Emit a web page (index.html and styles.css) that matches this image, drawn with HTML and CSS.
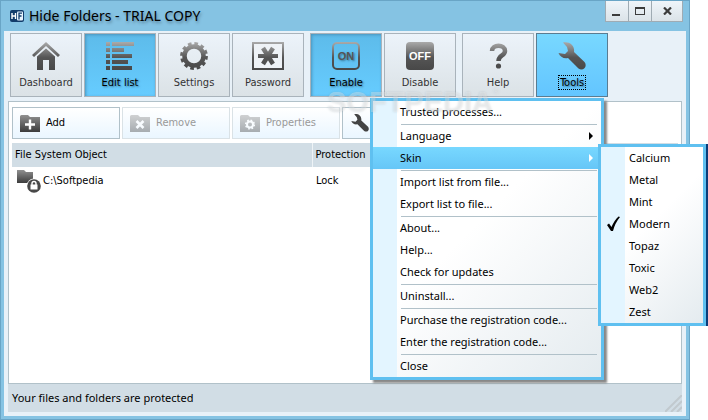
FILE: index.html
```
<!DOCTYPE html>
<html lang="en">
	<head>
		<meta charset="utf-8">
		<title>Hide Folders - TRIAL COPY</title>
		<link rel="stylesheet" href="styles.css">
	</head>
	<body>
		<!-- shared gradient and shapes -->
		<svg class="defs" width="0" height="0" aria-hidden="true">
			<defs>
				<linearGradient id="steel" gradientUnits="userSpaceOnUse" x1="0" y1="0" x2="0" y2="28">
					<stop offset="0" stop-color="#aaa"/>
					<stop offset="0.55" stop-color="#555"/>
					<stop offset="1" stop-color="#484848"/>
				</linearGradient>
				<linearGradient id="folderFill" x1="0" y1="0" x2="0" y2="1">
					<stop offset="0" stop-color="#909090"/>
					<stop offset="1" stop-color="#3c3c3c"/>
				</linearGradient>
				<path id="folder" d="M0 2.5 Q0 1 1.5 1H8L10 3H20V18H0Z"/>
				<path id="wrench" d="M5 0.5C11-1 17 3 16 10L26.500 20C30 24.500 25 29.500 20.500 26.500L10 16C6 17 2 15 0.5 11L7 12L10 9L9 5Z"/>
			</defs>
		</svg>
		<div class="window">
			<div class="titlebar">
				<svg class="logo" width="14" height="12" viewBox="0 0 14 12">
					<rect width="14" height="12" rx="2" fill="#123c6b"/>
					<path d="M2 3V9M5.5 3V9M2 6H5.5" stroke="#fff" stroke-width="1.4" fill="none"/>
					<rect x="7" y="1.5" width="6" height="9" rx="1" fill="#e8f4ff"/>
					<path d="M9 9.500V3.200H12M9 6H11.500" stroke="#123c6b" stroke-width="1.300" fill="none"/>
				</svg>
				<h1>Hide Folders - TRIAL COPY</h1>
				<div class="controls">
					<button type="button" aria-label="Minimize"><svg width="10" height="10"><path d="M0 9H8" stroke="#3c3c3c" stroke-width="2"/></svg></button>
					<button type="button" aria-label="Maximize"><svg width="10" height="8"><path d="M0 1H10" stroke="#3c3c3c" stroke-width="2"/><rect x="0.5" y="0.5" width="9" height="7" fill="none" stroke="#3c3c3c"/></svg></button>
					<button type="button" class="close" aria-label="Close"><svg width="9" height="8"><path d="M1 0.500L8 7.500M8 0.500L1 7.500" stroke="#3c3c3c" stroke-width="2.200"/></svg></button>
				</div>
			</div>
			<div class="main">
				<div class="toolbar">
					<button type="button">
						<svg width="28" height="28" viewBox="0 0 28 28" fill="url(#steel)"><path d="M14 0L28 13L26 15L14 4L2 15L0 13Z"/><path d="M5 14.500L14 6.500L23 14.500V28H17V18H11V28H5Z"/></svg>
						Dashboard
					</button>
					<button type="button" class="on">
						<svg width="28" height="28" viewBox="0 0 28 28" fill="url(#steel)"><path d="M0 0H4V4H0ZM6 0H28V4H6ZM0 6H4V10H0ZM6 6H18V10H6ZM0 12H4V16H0ZM6 12H26V16H6ZM0 18H4V22H0ZM6 18H22V22H6ZM0 24H4V28H0ZM6 24H26V28H6Z"/></svg>
						Edit list
					</button>
					<button type="button">
						<svg width="28" height="28" viewBox="0 0 28 28"><circle cx="14" cy="14" r="9.500" fill="none" stroke="url(#steel)" stroke-width="4.500"/><circle cx="14" cy="14" r="12.300" fill="none" stroke="url(#steel)" stroke-width="3.200" stroke-dasharray="3.600 2.840"/></svg>
						Settings
					</button>
					<button type="button">
						<svg width="32" height="28" viewBox="0 0 32 28"><rect x="1" y="1" width="30" height="26" fill="#eef2f6" stroke="url(#steel)" stroke-width="2"/><path d="M11 6L21 22M21 6L11 22" stroke="url(#steel)" stroke-width="4.500"/><path d="M6 12H26V16H6Z" fill="url(#steel)"/></svg>
						Password
					</button>
					<button type="button" class="on group">
						<svg width="28" height="28" viewBox="0 0 28 28"><rect x="1" y="1" width="26" height="26" rx="4" fill="none" stroke="url(#steel)" stroke-width="2"/><text x="14" y="18" text-anchor="middle" class="state" fill="#555">ON</text></svg>
						Enable
					</button>
					<button type="button">
						<svg width="28" height="28" viewBox="0 0 28 28"><rect width="28" height="28" rx="4" fill="url(#steel)"/><text x="14" y="18" text-anchor="middle" class="state" fill="#fff">OFF</text></svg>
						Disable
					</button>
					<button type="button" class="group">
						<svg width="28" height="28" viewBox="0 0 28 28"><path d="M8 9C8 2 21 2 21 9C21 14 14.500 13 14.500 19" fill="none" stroke="url(#steel)" stroke-width="4.500"/><circle cx="14.500" cy="24" r="2.600" fill="url(#steel)"/></svg>
						Help
					</button>
					<div class="dropdown">
						<button type="button" class="open" aria-haspopup="menu" aria-expanded="true">
							<svg width="28" height="28" viewBox="0 0 28 28" fill="url(#steel)"><use href="#wrench"/></svg>
							<span>Tools</span>
						</button>
						<ul class="menu" role="menu">
							<li><button type="button" role="menuitem">Trusted processes...</button></li>
							<li class="line"><button type="button" role="menuitem">Language<i class="arrow"></i></button></li>
							<li class="active">
								<button type="button" role="menuitem">Skin<i class="arrow"></i></button>
								<ul class="menu submenu" role="menu">
									<li><button type="button" role="menuitem">Calcium</button></li>
									<li><button type="button" role="menuitem">Metal</button></li>
									<li><button type="button" role="menuitem">Mint</button></li>
									<li><button type="button" role="menuitem"><svg class="check" width="13" height="16" viewBox="0 0 13 16"><path d="M0 9L2 7.500L4.500 11Q7.500 4 11.500 0.500L13 1Q8 7 6 15H4Z"/></svg>Modern</button></li>
									<li><button type="button" role="menuitem">Topaz</button></li>
									<li><button type="button" role="menuitem">Toxic</button></li>
									<li><button type="button" role="menuitem">Web2</button></li>
									<li><button type="button" role="menuitem">Zest</button></li>
								</ul>
							</li>
							<li class="line"><button type="button" role="menuitem">Import list from file...</button></li>
							<li><button type="button" role="menuitem">Export list to file...</button></li>
							<li class="line"><button type="button" role="menuitem">About...</button></li>
							<li><button type="button" role="menuitem">Help...</button></li>
							<li><button type="button" role="menuitem">Check for updates</button></li>
							<li class="line"><button type="button" role="menuitem">Uninstall...</button></li>
							<li class="line"><button type="button" role="menuitem">Purchase the registration code...</button></li>
							<li><button type="button" role="menuitem">Enter the registration code...</button></li>
							<li class="line"><button type="button" role="menuitem">Close</button></li>
						</ul>
					</div>
				</div>
				<div class="panel">
					<div class="actions">
						<button type="button"><svg width="20" height="18" viewBox="0 0 20 18"><use href="#folder" fill="url(#folderFill)"/><path d="M5 10.500H15M10 5.500V15.500" stroke="#fff" stroke-width="2.400"/></svg>Add</button>
						<button type="button" disabled><svg width="20" height="18" viewBox="0 0 20 18"><use href="#folder" fill="url(#folderFill)"/><path d="M6.500 7L13.500 14M13.500 7L6.500 14" stroke="#fff" stroke-width="2.600"/></svg>Remove</button>
						<button type="button" disabled><svg width="20" height="18" viewBox="0 0 20 18"><use href="#folder" fill="url(#folderFill)"/><circle cx="10" cy="10.500" r="3" fill="none" stroke="#fff" stroke-width="2"/><circle cx="10" cy="10.500" r="4.300" fill="none" stroke="#fff" stroke-width="1.600" stroke-dasharray="1.690 1.690"/></svg>Properties</button>
						<button type="button" aria-label="Tools"><svg width="20" height="18" viewBox="0 0 28 28" fill="#444"><use href="#wrench"/></svg></button>
					</div>
					<table class="list">
						<thead>
							<tr><th class="name">File System Object</th><th>Protection</th></tr>
						</thead>
						<tbody>
							<tr>
								<td class="name"><svg width="25" height="24" viewBox="0 0 25 24"><path d="M1 1H8L10 3H17V14H1Z" fill="url(#folderFill)"/><circle cx="18" cy="17" r="7.500" fill="#fff"/><circle cx="18" cy="17" r="6.800" fill="#484848"/><rect x="14.500" y="15.500" width="7" height="5" fill="#fff"/><path d="M16 16V14.500Q16 12.500 18 12.500Q20 12.500 20 14.500V16" fill="none" stroke="#fff" stroke-width="1.400"/></svg>C:\Softpedia</td>
								<td>Lock</td>
							</tr>
						</tbody>
					</table>
				</div>
				<div class="status">
					<span>Your files and folders are protected</span>
					<svg width="17" height="17" viewBox="0 0 17 17"><path d="M0 17L17 0M6 17L17 6M12 17L17 12" stroke="#c1c9ce" stroke-width="2"/></svg>
				</div>
			</div>
		</div>
		<div class="watermark">SOFTPEDIA<sup>&reg;</sup></div>
	</body>
</html>
```
FILE: styles.css
```
* { box-sizing:border-box; }
body { margin:0; padding-right:18px; background:#fff; color:#000; font:11px/22px "Noto Sans", "Open Sans", sans-serif; overflow:hidden; }
button { margin:0; padding:0; border:0; background:none; color:inherit; font:inherit; }
ul { margin:0; padding:0; list-style:none; }
.defs { position:absolute; }

.window { display:flex; flex-direction:column; min-height:100vh; padding:0 3px 3px; background:#85c3e3; border:1px solid #69a5c6; }
.titlebar { display:flex; align-items:center; height:30px; padding-left:6px; }
.titlebar h1 { flex:1; margin:0 0 0 5px; font-size:14px; font-weight:normal; text-shadow:1px 2px 3px #567d94; }
.controls { display:flex; align-self:flex-start; margin-right:3px; border:1px solid #9fabb3; border-top:0; }
.controls button { display:flex; align-items:center; justify-content:center; width:23px; height:20px; background:linear-gradient(#eff5fa, #dbe3e8); border-right:1px solid #9fabb3; }
.controls .close { width:30px; border:0; }

.main { flex:1; display:flex; flex-direction:column; padding:2px 4px 4px; background:#e8f1f8; }
.toolbar { display:flex; gap:2px; padding:0 2px; }
.toolbar > button, .dropdown > button { display:flex; flex-direction:column; align-items:center; width:72px; height:64px; padding-top:8px; border:1px solid #a9b3bb; background:linear-gradient(#ecf3fa, #dbe2e6); color:#333; line-height:16px; gap:5px; }
.toolbar > button, .dropdown > button, .panel { font-family:"DejaVu Sans Condensed", "Noto Sans", sans-serif; }
.toolbar > .group { margin-left:4px; }
.toolbar > .on { background:linear-gradient(#5dbbea, #66ccff); color:#000; box-shadow:inset 1px 1px 3px #4995bd; text-shadow:1px 1px 2px #37708e; }
.dropdown { position:relative; }
.dropdown > .open { border-color:#5a7c91; background:linear-gradient(#78d8ff, #63c5ff); color:#000; }
.dropdown > .open span { padding:0 1px; border:1px dotted #000; line-height:13px; text-shadow:1px 1px 2px #37708e; }
.state { font:bold 11px "Liberation Sans", sans-serif; }

.menu { position:absolute; top:65px; right:4px; z-index:2; width:234px; border:3px solid #5fc0f0; background:linear-gradient(90deg, #e3f5ff 24px, transparent 24px), linear-gradient(135deg, #fff 45%, #e4ebef); box-shadow:3px 3px 2px #888; }
.menu li { position:relative; }
.menu li button { display:flex; align-items:center; width:100%; height:22px; padding-left:27px; text-align:left; }
.menu .line { padding-top:2px; }
.menu .line::before { content:""; display:block; height:1px; margin:-1px 4px 0 28px; background:#b1c1c9; }
.menu .active > button { background:linear-gradient(#78d8ff, #66c6f7); }
.arrow { margin-left:auto; margin-right:8px; border:4px solid transparent; border-left-color:#000; border-right:0; }
.active > button .arrow { border-left-color:#fff; }
.menu .submenu { top:-3px; left:225px; right:auto; width:108px; box-shadow:2px 0 0 #0a3c78; }
.submenu li button { padding-left:28px; }
.check { margin:0 9px 0 -22px; }

.panel { flex:1; margin-top:4px; padding:5px 3px 2px; border:1px solid #b1c1c9; background:#fff; }
.actions { display:flex; gap:2px; }
.actions button { display:flex; align-items:center; gap:6px; width:108px; height:32px; padding-left:7px; border:1px solid #b1c1c9; background:linear-gradient(#fff, #eaf6ff); }
.actions button:disabled { border-color:#dae2e6; color:#999; }
.actions button:disabled svg { opacity:.4; }
.list { width:100%; margin-top:4px; border-collapse:collapse; text-align:left; }
.list th { height:24px; padding:0 3px; background:#d1dde5; border-left:1px solid #eef3f6; font-weight:normal; }
.list th:first-child { border-left:0; }
.list .name { width:300px; }
.list td { padding:2px 4px; }
.list .name svg { margin-right:2px; vertical-align:middle; }

.status { display:flex; align-items:flex-end; justify-content:space-between; height:28px; padding-left:4px; background:#d1dde5; }
.status span { line-height:28px; }

.watermark { position:absolute; top:88px; left:327px; z-index:3; color:rgba(255,255,255,.3); font:bold 29px/29px "Liberation Sans", sans-serif; text-shadow:0 0 2px rgba(120,130,140,.25); pointer-events:none; }
.watermark sup { font-size:8px; line-height:8px; vertical-align:top; }
```
